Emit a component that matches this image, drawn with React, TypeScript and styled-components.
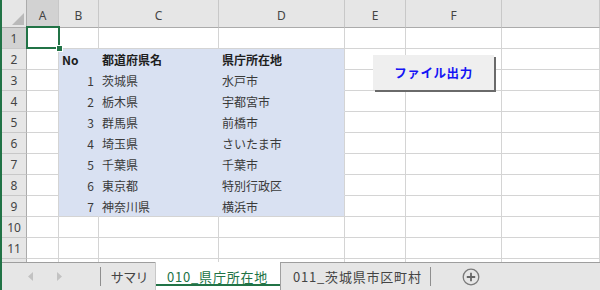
import React from 'react'
import styled, { createGlobalStyle } from 'styled-components'

const GlobalStyle = createGlobalStyle`
    html, body {
        margin: 0;
        padding: 0;
        background: #ffffff;
    }
    body {
        font-family: "Noto Sans CJK JP", "Noto Sans", sans-serif;
    }
`

const FILL = '#d9e1f2'
const GRID = '#d4d4d4'
const HEAD_LINE = '#ababab'

const columns = ['A', 'B', 'C', 'D', 'E', 'F', '']

type Row = [string, string, string]

const tableRows: Row[] = [
    ['No', '都道府県名', '県庁所在地'],
    ['1', '茨城県', '水戸市'],
    ['2', '栃木県', '宇都宮市'],
    ['3', '群馬県', '前橋市'],
    ['4', '埼玉県', 'さいたま市'],
    ['5', '千葉県', '千葉市'],
    ['6', '東京都', '特別行政区'],
    ['7', '神奈川県', '横浜市'],
]

const sheetTabs = [
    { name: 'サマリ', active: false, width: 54, pad: 10 },
    { name: '010_県庁所在地', active: true, width: 126, pad: 11 },
    { name: '011_茨城県市区町村', active: false, width: 149, pad: 12 },
]

export default function App() {
    const rows = Array.from({ length: 12 }, (_, i) => i + 1)

    return (
        <>
            <GlobalStyle />
            <Frame>
                <Sheet>
                    <Corner>
                        <CornerMark />
                    </Corner>
                    {columns.map((c, i) => (
                        <ColHead key={i} $selected={c === 'A'}>
                            {c}
                        </ColHead>
                    ))}
                    {rows.map((r) => {
                        const data = r >= 2 && r <= 9 ? tableRows[r - 2] : null
                        const last = r === 9
                        return (
                            <React.Fragment key={r}>
                                <RowHead $selected={r === 1}>{r}</RowHead>
                                <Cell />
                                <Cell $fill={!!data} $keepBottom={last} $align={data && r > 2 ? 'right' : 'left'} $bold={r === 2}>
                                    {data?.[0]}
                                </Cell>
                                <Cell $fill={!!data} $keepBottom={last} $bold={r === 2}>
                                    {data?.[1]}
                                </Cell>
                                <Cell $fill={!!data} $keepBottom={last} $keepRight $bold={r === 2}>
                                    {data?.[2]}
                                </Cell>
                                <Cell />
                                <Cell />
                                <Cell />
                            </React.Fragment>
                        )
                    })}
                    <Selection>
                        <FillHandle />
                    </Selection>
                    <MacroButton>ファイル出力</MacroButton>
                </Sheet>
                <TabBar>
                    <NavArrows>
                        <svg width="6" height="9" viewBox="0 0 6 9">
                            <path d="M5 0 L0 4.5 L5 9 Z" fill="#c2c2c2" />
                        </svg>
                        <svg width="6" height="9" viewBox="0 0 6 9">
                            <path d="M1 0 L6 4.5 L1 9 Z" fill="#c2c2c2" />
                        </svg>
                    </NavArrows>
                    <Divider />
                    {sheetTabs.map((t) => (
                        <SheetTab key={t.name} $active={t.active} $width={t.width} $pad={t.pad}>
                            {t.name}
                        </SheetTab>
                    ))}
                    <Divider />
                    <AddSheet>
                        <svg width="18" height="18" viewBox="0 0 18 18">
                            <circle cx="9" cy="9" r="7.8" fill="none" stroke="#7a7a7a" strokeWidth="1.3" />
                            <path d="M9 4.8 V13.2 M4.8 9 H13.2" stroke="#666" strokeWidth="1.8" />
                        </svg>
                    </AddSheet>
                </TabBar>
            </Frame>
        </>
    )
}

const Frame = styled.div`
    width: 598px;
    height: 290px;
    border-left: 2px solid #217346;
    display: flex;
    flex-direction: column;
    overflow: hidden;
`

const Sheet = styled.div`
    position: relative;
    height: 262px;
    flex: none;
    overflow: hidden;
    display: grid;
    grid-template-columns: 25px 32px 40px 120px 126px 61px 96px 1fr;
    grid-template-rows: 28px;
    grid-auto-rows: 21px;
`

const Corner = styled.div`
    background: #e6e6e6;
    border-right: 1px solid ${HEAD_LINE};
    border-bottom: 1px solid ${HEAD_LINE};
    display: flex;
    align-items: flex-end;
    justify-content: flex-end;
    padding: 0 2px 2px 0;
`

const CornerMark = styled.div`
    width: 0;
    height: 0;
    border-left: 12px solid transparent;
    border-bottom: 12px solid #b9b9b9;
`

const ColHead = styled.div<{ $selected?: boolean }>`
    background: ${(p) => (p.$selected ? '#d2d2d2' : '#e6e6e6')};
    border-right: 1px solid #c8c8c8;
    border-bottom: 1px solid ${HEAD_LINE};
    box-sizing: border-box;
    display: flex;
    align-items: flex-end;
    justify-content: center;
    padding-bottom: 3px;
    font-family: "Noto Sans", "Liberation Sans", sans-serif;
    font-size: 12px;
    color: #444;
`

const RowHead = styled.div<{ $selected?: boolean }>`
    background: ${(p) => (p.$selected ? '#d2d2d2' : '#e6e6e6')};
    border-right: 1px solid ${HEAD_LINE};
    border-bottom: 1px solid #c8c8c8;
    box-sizing: border-box;
    display: flex;
    align-items: center;
    justify-content: center;
    font-family: "Noto Sans", "Liberation Sans", sans-serif;
    font-size: 12px;
    color: #444;
`

const Cell = styled.div<{ $fill?: boolean; $bold?: boolean; $align?: 'left' | 'right'; $keepRight?: boolean; $keepBottom?: boolean }>`
    box-sizing: border-box;
    background: ${(p) => (p.$fill ? FILL : '#ffffff')};
    border-right: 1px solid ${(p) => (p.$fill && !p.$keepRight ? FILL : GRID)};
    border-bottom: 1px solid ${(p) => (p.$fill && !p.$keepBottom ? FILL : GRID)};
    display: flex;
    align-items: center;
    justify-content: ${(p) => (p.$align === 'right' ? 'flex-end' : 'flex-start')};
    padding: 0 ${(p) => (p.$align === 'right' ? '4px' : '0')} 0 ${(p) => (p.$align === 'right' ? '0' : '3px')};
    font-size: 12px;
    font-weight: ${(p) => (p.$bold ? 700 : 400)};
    color: ${(p) => (p.$bold ? '#1e1e1e' : '#3a3a3a')};
    white-space: nowrap;
    overflow: hidden;
`

const Selection = styled.div`
    position: absolute;
    left: 24px;
    top: 26px;
    width: 30px;
    height: 19px;
    border: 2px solid #217346;
    pointer-events: none;
`

const FillHandle = styled.div`
    position: absolute;
    right: -5px;
    bottom: -5px;
    width: 5px;
    height: 5px;
    background: #217346;
    border: 1px solid #ffffff;
`

const MacroButton = styled.div`
    position: absolute;
    left: 371px;
    top: 55px;
    width: 121px;
    height: 35px;
    box-sizing: border-box;
    background: #efefef;
    box-shadow: 2px 2px 0 #6a6a6a;
    display: flex;
    align-items: center;
    justify-content: center;
    font-size: 12.5px;
    font-weight: 700;
    letter-spacing: 0.6px;
    color: #1414f5;
`

const TabBar = styled.div`
    flex: 1;
    background: #e6e6e6;
    border-top: 1px solid #9e9e9e;
    display: flex;
    align-items: stretch;
    font-size: 13px;
    font-feature-settings: "palt";
`

const NavArrows = styled.div`
    width: 98px;
    display: flex;
    align-items: center;
    gap: 22px;
    padding-left: 26px;
    box-sizing: border-box;
`

const Divider = styled.div`
    width: 1px;
    margin: 4px 0 4px;
    background: #8f8f8f;
`

const SheetTab = styled.div<{ $active?: boolean; $width: number; $pad: number }>`
    box-sizing: border-box;
    width: ${(p) => p.$width}px;
    flex: none;
    display: flex;
    align-items: center;
    padding-left: ${(p) => p.$pad}px;
    margin-top: ${(p) => (p.$active ? '-1px' : '0')};
    background: ${(p) => (p.$active ? '#ffffff' : 'transparent')};
    color: ${(p) => (p.$active ? '#217346' : '#444')};
    border-left: ${(p) => (p.$active ? '1px solid #c8c8c8' : 'none')};
    border-right: ${(p) => (p.$active ? '1px solid #a0a0a0' : 'none')};
    box-shadow: ${(p) => (p.$active ? 'inset 0 -4px 0 #ffffff, inset 0 -6px 0 #217346' : 'none')};
    letter-spacing: 0.8px;
    white-space: nowrap;
`

const AddSheet = styled.div`
    display: flex;
    align-items: center;
    padding-left: 31px;
`
